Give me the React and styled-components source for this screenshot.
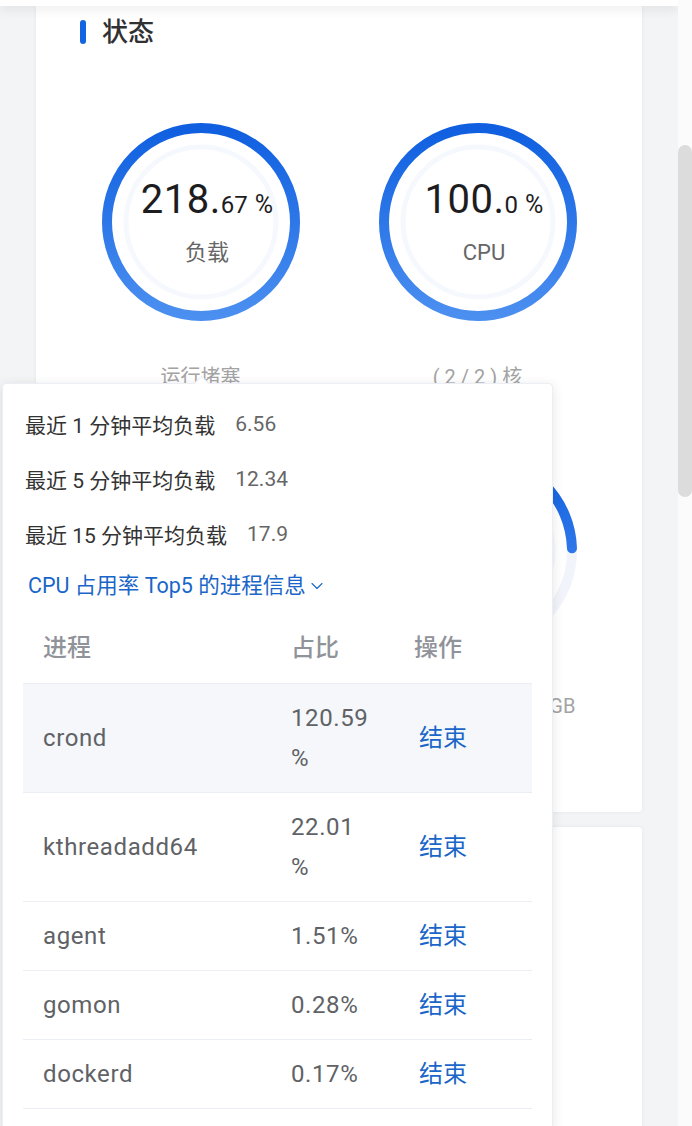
import React, { useId } from 'react';
import styled, { createGlobalStyle } from 'styled-components';
import { ChevronDown } from 'lucide-react';

const GlobalStyle = createGlobalStyle`
  html, body, #root { height: 100%; }
  body {
    margin: 0;
    background: #f3f4f6;
    font-family: Roboto, "Noto Sans CJK SC", sans-serif;
    color: #303133;
  }
  * { box-sizing: border-box; }
`;

const Page = styled.div`
  display: flex;
  height: 100vh;
  overflow: hidden;
`;

const Main = styled.div`
  flex: 1;
  position: relative;
  overflow: hidden;
`;

const TopBar = styled.div`
  position: relative;
  z-index: 2;
  height: 6px;
  background: #fff;
  box-shadow: 0 2px 12px rgba(0, 0, 0, 0.12);
`;

const Column = styled.div`
  display: flex;
  flex-direction: column;
  gap: 15px;
  padding: 0 36px;
`;

const Card = styled.section`
  background: #fff;
  border-radius: 0 0 4px 4px;
  box-shadow: 0 0 4px rgba(0, 0, 0, 0.06);
  padding: 12px 26px 92px;
`;

const BlankCard = styled(Card)`
  border-radius: 4px;
  min-height: 400px;
  padding: 0;
`;

const CardTitle = styled.h2`
  display: flex;
  align-items: center;
  gap: 16px;
  margin: 0 0 0 18px;
  font-size: 26px;
  font-weight: 500;
  line-height: 28px;
  color: #303133;

  &::before {
    content: '';
    width: 6px;
    height: 24px;
    border-radius: 3px;
    background: #1463e0;
  }
`;

const GaugeGrid = styled.div`
  display: grid;
  grid-template-columns: 1fr 1fr;
  row-gap: 61px;
  margin-top: 77px;
`;

const GaugeItem = styled.div`
  display: flex;
  flex-direction: column;
  align-items: center;
`;

const Dial = styled.div`
  display: grid;
  place-items: center;
  width: 198px;
  height: 198px;

  & > * { grid-area: 1 / 1; }
`;

const Readout = styled.div`
  display: flex;
  flex-direction: column;
  align-items: center;
  padding-left: 13px;
`;

const Value = styled.div`
  line-height: 46px;
  color: #1d1d1f;
  white-space: nowrap;
`;

const Whole = styled.span`
  font-size: 40px;
  letter-spacing: 0.5px;
`;

const Fraction = styled.span`
  font-size: 24px;
`;

const Unit = styled.span`
  font-size: 25px;
  margin-left: 7px;
`;

const DialLabel = styled.div`
  margin-top: 8px;
  line-height: 28px;
  font-size: 22px;
  color: #666;
`;

const Caption = styled.div`
  margin-top: 42px;
  line-height: 28px;
  font-size: 20px;
  color: #a3a3a3;
  white-space: nowrap;
`;

const Popover = styled.div`
  position: absolute;
  z-index: 3;
  left: 2px;
  top: 383px;
  width: 551px;
  padding: 12px 20px 20px;
  background: #fff;
  border: 1px solid #ebeef5;
  border-radius: 4px;
  box-shadow: 0 2px 12px rgba(0, 0, 0, 0.1);

  &::before {
    content: '';
    position: absolute;
    top: -6px;
    left: 193px;
    width: 10px;
    height: 10px;
    background: #fff;
    border-left: 1px solid #ebeef5;
    border-top: 1px solid #ebeef5;
    transform: rotate(45deg);
  }
`;

const StatRow = styled.div`
  display: flex;
  align-items: center;
  gap: 20px;
  height: 55px;
  padding-left: 2px;
  font-size: 21px;
  color: #333;
`;

const StatValue = styled.span`
  color: #666;
`;

const TopLink = styled.div`
  display: flex;
  align-items: center;
  margin-top: 10px;
  padding-left: 5px;
  line-height: 30px;
  font-size: 21.5px;
  color: #1a66c8;

  svg { margin-left: 1px; }
`;

const Table = styled.table`
  width: 509px;
  margin-top: 14px;
  border-collapse: collapse;
  table-layout: fixed;
`;

const Th = styled.th`
  height: 68px;
  padding: 0 20px 6px;
  text-align: left;
  font-size: 24px;
  font-weight: 500;
  color: #909399;
  border-bottom: 1px solid #ebeef5;
`;

const Row = styled.tr`
  background: ${p => (p.$hover ? '#f5f7fa' : '#fff')};
`;

const Td = styled.td`
  padding: 14px 20px;
  line-height: 40px;
  font-size: 24px;
  letter-spacing: 0.6px;
  color: #606266;
  border-bottom: 1px solid #ebeef5;
`;

const KillButton = styled.span`
  padding-left: 5px;
  letter-spacing: 0;
  color: #1a66c8;
  cursor: pointer;
`;

const ScrollTrack = styled.div`
  width: 14px;
  flex-shrink: 0;
  background: #fbfbfb;
`;

const Thumb = styled.div`
  margin-top: 145px;
  height: 352px;
  border-radius: 7px;
  background: #dcdcdd;
`;

const Gauge = ({ whole, fraction, label, caption, percent }) => {
  const id = useId();
  const r = 94;
  const len = 2 * Math.PI * r;
  return (
    <GaugeItem>
      <Dial>
        <svg width="198" height="198" viewBox="0 0 198 198">
          <defs>
            <linearGradient id={id} x1="1" y1="0" x2="0" y2="0">
              <stop offset="0" stopColor="#0f5fe0" />
              <stop offset="1" stopColor="#4b8ff0" />
            </linearGradient>
          </defs>
          <circle cx="99" cy="99" r={r} fill="none" stroke="#f1f5fb" strokeWidth="10" />
          <circle cx="99" cy="99" r="75" fill="none" stroke="#f5f8fd" strokeWidth="5" />
          <circle
            cx="99"
            cy="99"
            r={r}
            fill="none"
            stroke={`url(#${id})`}
            strokeWidth="10"
            strokeLinecap="round"
            strokeDasharray={`${len * percent} ${len}`}
            transform="rotate(-90 99 99)"
          />
        </svg>
        <Readout>
          <Value>
            <Whole>{whole}.</Whole>
            <Fraction>{fraction}</Fraction>
            <Unit>%</Unit>
          </Value>
          <DialLabel>{label}</DialLabel>
        </Readout>
      </Dial>
      <Caption>{caption}</Caption>
    </GaugeItem>
  );
};

const loads = [
  { label: '最近 1 分钟平均负载', value: '6.56' },
  { label: '最近 5 分钟平均负载', value: '12.34' },
  { label: '最近 15 分钟平均负载', value: '17.9' },
];

const processes = [
  { name: 'crond', usage: '120.59 %', hover: true },
  { name: 'kthreadadd64', usage: '22.01 %' },
  { name: 'agent', usage: '1.51%' },
  { name: 'gomon', usage: '0.28%' },
  { name: 'dockerd', usage: '0.17%' },
];

export default function App() {
  return (
    <>
      <GlobalStyle />
      <Page>
        <Main>
          <TopBar />
          <Column>
            <Card>
              <CardTitle>状态</CardTitle>
              <GaugeGrid>
                <Gauge whole="218" fraction="67" label="负载" caption="运行堵塞" percent={1} />
                <Gauge whole="100" fraction="0" label="CPU" caption="( 2 / 2 ) 核" percent={1} />
                <Gauge whole="78" fraction="35" label="内存" caption="( 2.83 / 3.61 ) GB" percent={0.78} />
                <Gauge whole="24" fraction="12" label="磁盘" caption="( 112.51 / 139.25 ) GB" percent={0.245} />
              </GaugeGrid>
            </Card>
            <BlankCard />
          </Column>
          <Popover>
            {loads.map(l => (
              <StatRow key={l.label}>
                <span>{l.label}</span>
                <StatValue>{l.value}</StatValue>
              </StatRow>
            ))}
            <TopLink>
              CPU 占用率 Top5 的进程信息
              <ChevronDown size={20} strokeWidth={1.3} />
            </TopLink>
            <Table>
              <colgroup>
                <col style={{ width: 248 }} />
                <col style={{ width: 123 }} />
                <col />
              </colgroup>
              <thead>
                <tr>
                  <Th>进程</Th>
                  <Th>占比</Th>
                  <Th>操作</Th>
                </tr>
              </thead>
              <tbody>
                {processes.map(p => (
                  <Row key={p.name} $hover={p.hover}>
                    <Td>{p.name}</Td>
                    <Td>{p.usage}</Td>
                    <Td>
                      <KillButton>结束</KillButton>
                    </Td>
                  </Row>
                ))}
              </tbody>
            </Table>
          </Popover>
        </Main>
        <ScrollTrack>
          <Thumb />
        </ScrollTrack>
      </Page>
    </>
  );
}
